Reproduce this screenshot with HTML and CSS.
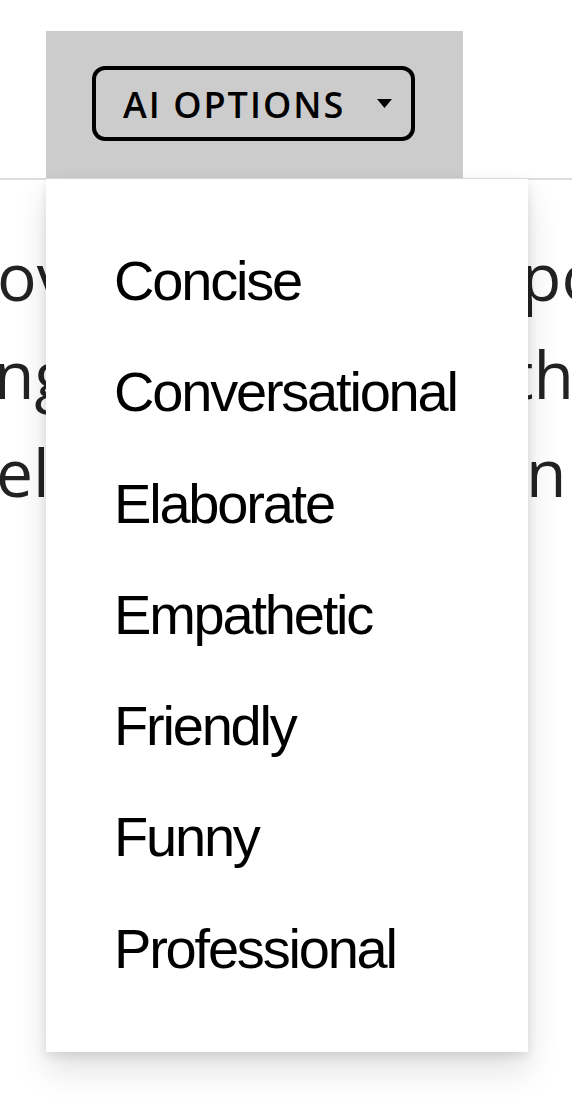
FILE: index.html
```html
<!DOCTYPE html>
<html lang="en">
<head>
<meta charset="utf-8">
<title>AI Options</title>
<link rel="stylesheet" href="styles.css">
</head>
<body>
<header class="topbar">
  <div class="toolbar">
    <button class="ai-btn" type="button">
      <span class="ai-label">AI OPTIONS</span>
      <svg class="caret" width="15" height="9" viewBox="0 0 15 9" aria-hidden="true"><path d="M0 0 H15 L7.5 9 Z" fill="#000"/></svg>
    </button>
  </div>
</header>
<main class="content">
  <div class="line line-1"><span class="frag-l">ov</span><span class="frag-r">po</span></div>
  <div class="line line-2"><span class="frag-l">ng</span><span class="frag-r">th</span></div>
  <div class="line line-3"><span class="frag-l">el</span><span class="frag-r">n f</span></div>
</main>
<ul class="dropdown">
  <li class="item">Concise</li>
  <li class="item">Conversational</li>
  <li class="item">Elaborate</li>
  <li class="item">Empathetic</li>
  <li class="item">Friendly</li>
  <li class="item">Funny</li>
  <li class="item">Professional</li>
</ul>
</body>
</html>
```
FILE: styles.css
```css
html, body {
  margin: 0;
  padding: 0;
  background: #fff;
  overflow: hidden;
}
body {
  width: 572px;
  height: 1098px;
  position: relative;
  font-family: "Open Sans", "Liberation Sans", sans-serif;
}
.topbar {
  padding-top: 31px;
  border-bottom: 2px solid #dedede;
}
.toolbar {
  margin-left: 46px;
  width: 417px;
  height: 147px;
  box-sizing: border-box;
  background: #cccccc;
  padding: 35px 0 0 46px;
}
.ai-btn {
  display: flex;
  align-items: center;
  box-sizing: border-box;
  width: 323px;
  height: 75px;
  border: 4px solid #000;
  border-radius: 13px;
  background: transparent;
  padding: 0 19px 0 27px;
  margin: 0;
  font-family: "Open Sans", sans-serif;
  font-weight: 600;
  font-size: 36px;
  letter-spacing: 2px;
  color: #000;
  line-height: 1;
}
.ai-label {
  flex: 1;
  text-align: left;
  padding-top: 2px;
}
.caret {
  display: block;
}
.content {
  margin-top: 46px;
  width: 572px;
  overflow: hidden;
  font-family: "Open Sans", sans-serif;
  font-size: 66px;
  line-height: 98px;
  color: #222;
}
.line {
  display: flex;
  white-space: nowrap;
}
.frag-l {
  flex: 0 0 528px;
}
.frag-r {
  flex: 0 0 auto;
}
.line-1 .frag-l { margin-left: -3px; }
.line-2 .frag-l { margin-left: -6px; }
.line-3 .frag-l { margin-left: -4px; }
.line-1 .frag-r { margin-left: -4px; }
.line-2 .frag-r { margin-left: -12px; }
.line-3 .frag-r { margin-left: 2px; word-spacing: -6px; }
.dropdown {
  position: absolute;
  top: 179px;
  left: 46px;
  width: 482px;
  height: 873px;
  box-sizing: border-box;
  margin: 0;
  padding: 46px 0 0 68px;
  list-style: none;
  background: #fff;
  box-shadow: 0 18px 32px rgba(0,0,0,0.12), 0 4px 10px rgba(0,0,0,0.10);
}
.item {
  font-family: "Liberation Sans", Arial, sans-serif;
  font-size: 56px;
  letter-spacing: -2.2px;
  line-height: 111.3px;
  color: #000;
}
```
